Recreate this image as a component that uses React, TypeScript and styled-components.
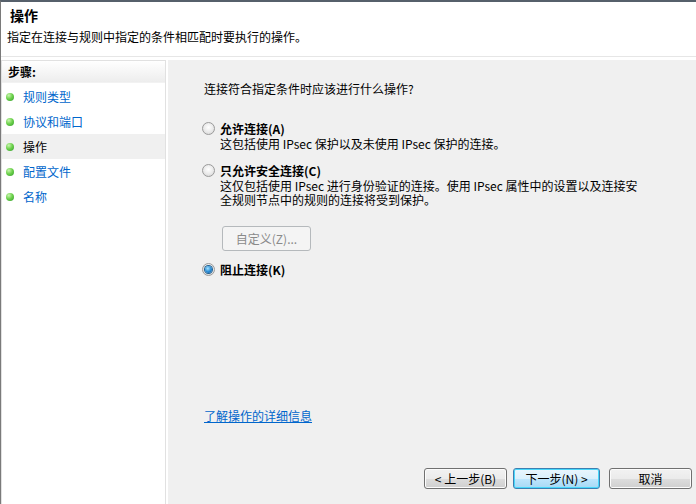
import React from "react";
import styled, { createGlobalStyle, css } from "styled-components";

const Global = createGlobalStyle`
  html, body { margin: 0; padding: 0; background: #ffffff; }
  body { font-family: "Noto Sans CJK SC", "DejaVu Sans", sans-serif; font-size: 12px; color: #000; }
  * { box-sizing: border-box; }
`;

const Window = styled.div`
  width: 696px;
  height: 504px;
  background: #ffffff;
  border-top: 2px solid #56606b;
  border-left: 1px solid #7a7a7a;
  display: flex;
  flex-direction: column;
  overflow: hidden;
`;

const Header = styled.header`
  height: 55px;
  padding-top: 4px;
  border-bottom: 1px solid #e6e6e6;
  flex: none;
`;

const Title = styled.h1`
  margin: 0 0 0 9px;
  font-size: 14px;
  line-height: 18px;
  font-weight: bold;
`;

const Subtitle = styled.p`
  margin: 5px 0 0 6px;
  font-size: 12px;
  line-height: 16px;
`;

const Body = styled.div`
  flex: 1;
  display: flex;
  padding-top: 3px;
  min-height: 0;
`;

const StepsPanel = styled.nav`
  width: 165px;
  border: 1px solid #e1e1e1;
  border-bottom: none;
  background: #ffffff;
  flex: none;
`;

const StepsHeader = styled.div`
  height: 22px;
  padding-left: 6px;
  display: flex;
  align-items: center;
  font-weight: bold;
  background: linear-gradient(#ffffff, #ededed);
  border-bottom: 1px solid #f2f2f2;
`;

const StepList = styled.ul`
  list-style: none;
  margin: 0;
  padding: 1px 0 0 0;
`;

const StepItem = styled.li<{ $active?: boolean }>`
  height: 25px;
  display: flex;
  align-items: center;
  padding-left: 4px;
  gap: 9px;
  color: ${(p) => (p.$active ? "#000000" : "#0066cc")};
  background: ${(p) => (p.$active ? "#f0f0f0" : "transparent")};
`;

const Bullet = styled.span`
  width: 8px;
  height: 8px;
  border-radius: 50%;
  background: radial-gradient(circle at 35% 30%, #c9f5b0 0%, #6fd24e 45%, #2f9a28 100%);
  flex: none;
`;

const Content = styled.main`
  flex: 1;
  margin-left: 2px;
  background: #f0f0f0;
  display: flex;
  flex-direction: column;
  padding: 21px 4px 15px 34px;
`;

const Question = styled.p`
  margin: 0 0 0 2px;
  line-height: 16px;
`;

const OptionGroup = styled.div<{ $top: number }>`
  margin-top: ${(p) => p.$top}px;
`;

const OptionRow = styled.label`
  display: flex;
  align-items: center;
  gap: 5px;
  height: 16px;
  font-weight: bold;
`;

const Radio = styled.span<{ $checked?: boolean }>`
  width: 13px;
  height: 13px;
  border-radius: 50%;
  border: 1px solid #9a9a9a;
  background: radial-gradient(circle at 50% 40%, #ffffff 0%, #e9e9e9 55%, #cfcfcf 100%);
  flex: none;
  display: flex;
  align-items: center;
  justify-content: center;
  ${(p) =>
    p.$checked &&
    css`
      &::after {
        content: "";
        width: 7px;
        height: 7px;
        border-radius: 50%;
        background: radial-gradient(circle at 40% 35%, #a8e4ff 0%, #2b8fd8 50%, #0b4f93 100%);
        box-shadow: 0 0 0 1px #1f5f8f;
      }
    `}
`;

const Description = styled.p`
  margin: 1px 0 0 18px;
  line-height: 14px;
  white-space: nowrap;
`;

const CustomButton = styled.button`
  margin: 19px 0 0 20px;
  width: 89px;
  height: 25px;
  border: 1px solid #b5b9bc;
  border-radius: 3px;
  background: #f4f4f4;
  color: #8a8a8a;
  font-family: inherit;
  font-size: 12px;
  padding: 0;
  text-align: center;
`;

const LearnLink = styled.a`
  margin: auto 0 0 2px;
  color: #0066cc;
  text-decoration: underline;
  line-height: 16px;
  align-self: flex-start;
`;

const Footer = styled.div`
  margin-top: 44px;
  display: flex;
  justify-content: flex-end;
  gap: 6px;
`;

const DialogButton = styled.button<{ $width: number; $focused?: boolean; $extraGap?: number }>`
  width: ${(p) => p.$width}px;
  height: 21px;
  margin-left: ${(p) => p.$extraGap ?? 0}px;
  padding: 0;
  font-family: inherit;
  font-size: 12px;
  color: #000;
  border-radius: 3px;
  border: 1px solid ${(p) => (p.$focused ? "#3c7fb1" : "#707070")};
  background: ${(p) =>
    p.$focused
      ? "linear-gradient(#eaf6fd 0%, #d9f0fc 50%, #bee6fd 51%, #a7d9f5 100%)"
      : "linear-gradient(#f2f2f2 0%, #ebebeb 50%, #dddddd 51%, #cfcfcf 100%)"};
  box-shadow: inset 0 0 0 1px ${(p) => (p.$focused ? "#48d8fb" : "#fcfcfc")};
`;

const steps = [
  { label: "规则类型" },
  { label: "协议和端口" },
  { label: "操作", active: true },
  { label: "配置文件" },
  { label: "名称" },
];

export default function App() {
  return (
    <>
      <Global />
      <Window>
        <Header>
          <Title>操作</Title>
          <Subtitle>指定在连接与规则中指定的条件相匹配时要执行的操作。</Subtitle>
        </Header>
        <Body>
          <StepsPanel>
            <StepsHeader>步骤:</StepsHeader>
            <StepList>
              {steps.map((s) => (
                <StepItem key={s.label} $active={s.active}>
                  <Bullet />
                  {s.label}
                </StepItem>
              ))}
            </StepList>
          </StepsPanel>
          <Content>
            <Question>连接符合指定条件时应该进行什么操作?</Question>
            <OptionGroup $top={23}>
              <OptionRow>
                <Radio />
                允许连接(A)
              </OptionRow>
              <Description>这包括使用 IPsec 保护以及未使用 IPsec 保护的连接。</Description>
            </OptionGroup>
            <OptionGroup $top={11}>
              <OptionRow>
                <Radio />
                只允许安全连接(C)
              </OptionRow>
              <Description>
                这仅包括使用 IPsec 进行身份验证的连接。使用 IPsec 属性中的设置以及连接安
                <br />
                全规则节点中的规则的连接将受到保护。
              </Description>
            </OptionGroup>
            <div>
              <CustomButton disabled>自定义(Z)...</CustomButton>
            </div>
            <OptionGroup $top={10}>
              <OptionRow>
                <Radio $checked />
                阻止连接(K)
              </OptionRow>
            </OptionGroup>
            <LearnLink href="#">了解操作的详细信息</LearnLink>
            <Footer>
              <DialogButton $width={83}>&lt; 上一步(B)</DialogButton>
              <DialogButton $width={87} $focused>
                下一步(N) &gt;
              </DialogButton>
              <DialogButton $width={83} $extraGap={3}>
                取消
              </DialogButton>
            </Footer>
          </Content>
        </Body>
      </Window>
    </>
  );
}
